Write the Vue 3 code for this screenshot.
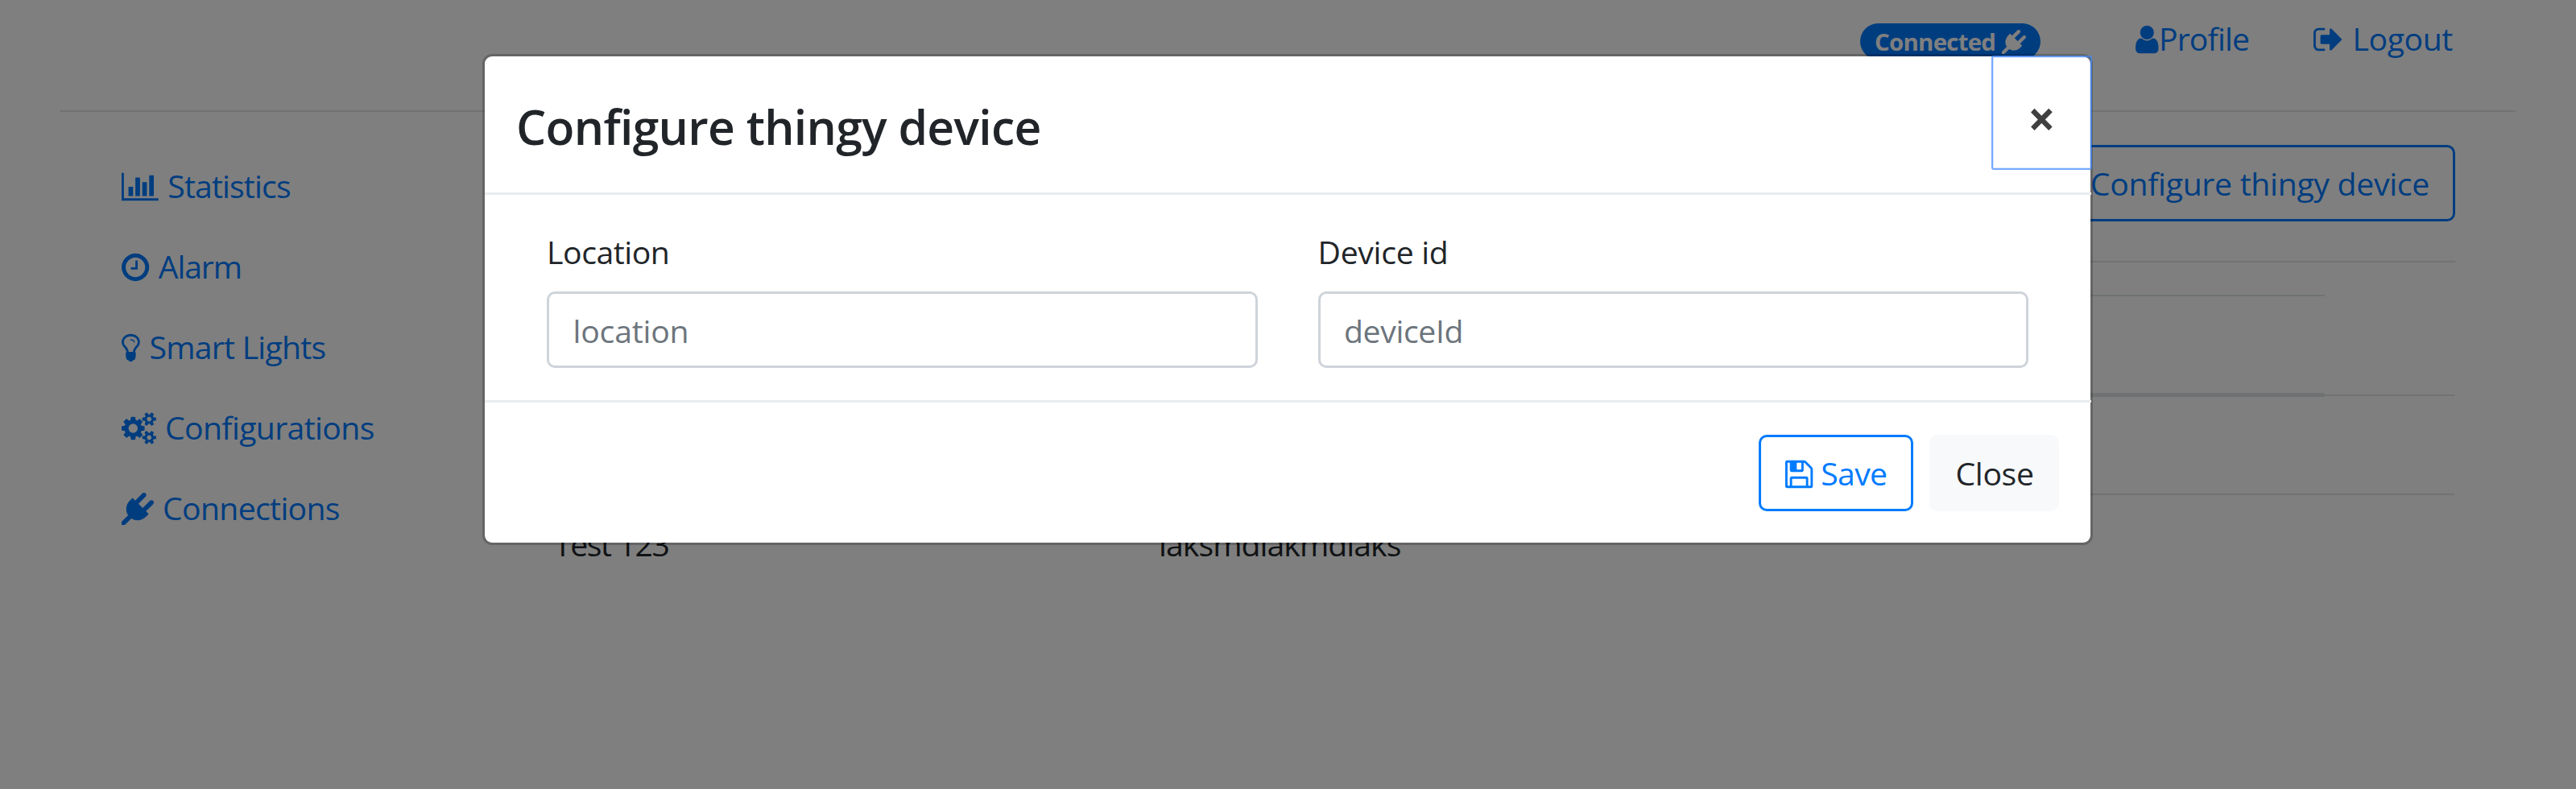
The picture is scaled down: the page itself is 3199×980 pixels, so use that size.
<script setup>
import { ref } from 'vue'

const icons = {
  chart: { box: '-128 0 2048 1792', d: 'M640 896v512h-256v-512h256zm384-512v1024h-256v-1024h256zm1024 1152v128h-2048v-1536h128v1408h1920zm-640-896v768h-256v-768h256zm384-384v1152h-256v-1152h256z', shift: true },
  clock: { box: '128 0 1536 1792', d: 'M1024 544v448q0 14-9 23t-23 9h-320q-14 0-23-9t-9-23v-64q0-14 9-23t23-9h224v-352q0-14 9-23t23-9h64q14 0 23 9t9 23zm416 352q0-148-73-273t-198-198-273-73-273 73-198 198-73 273 73 273 198 198 273 73 273-73 198-198 73-273zm224 0q0 209-103 385.5t-279.5 279.5-385.5 103-385.5-103-279.5-279.5-103-385.5 103-385.5 279.5-279.5 385.5-103 385.5 103 279.5 279.5 103 385.5z' },
  bulb: { box: '384 0 1024 1792', d: 'M1120 576q0 13-9.5 22.5t-22.5 9.5-22.5-9.5-9.5-22.5q0-46-54-71t-106-25q-13 0-22.5-9.5t-9.5-22.5 9.5-22.5 22.5-9.5q50 0 99.5 16t87 54 37.5 90zm160 0q0-72-34.5-134t-90-101.5-123-62-136.5-22.5-136.5 22.5-123 62-90 101.5-34.5 134q0 101 68 180 10 11 30.5 33t30.5 33q128 153 141 298h228q13-145 141-298 10-11 30.5-33t30.5-33q68-79 68-180zm128 0q0 155-103 268-45 49-74.5 87t-59.5 95.5-34 107.5q47 28 47 82 0 37-25 64 25 27 25 64 0 52-45 81 13 23 13 47 0 46-31.5 71t-77.5 25q-20 44-60 70t-87 26-87-26-60-70q-46 0-77.5-25t-31.5-71q0-24 13-47-45-29-45-81 0-37 25-64-25-27-25-64 0-54 47-82-4-50-34-107.5t-59.5-95.5-74.5-87q-103-113-103-268 0-99 44.5-184.5t117-142 164-89 186.5-32.5 186.5 32.5 164 89 117 142 44.5 184.5z' },
  cogs: { box: '-64 0 1920 1792', d: 'M832 896q0-106-75-181t-181-75-181 75-75 181 75 181 181 75 181-75 75-181zm768 512q0-52-38-90t-90-38-90 38-38 90q0 53 37.5 90.5t90.5 37.5 90.5-37.5 37.5-90.5zm0-1024q0-52-38-90t-90-38-90 38-38 90q0 53 37.5 90.5t90.5 37.5 90.5-37.5 37.5-90.5zm-384 421v185q0 10-7 19.5t-16 10.5l-155 24q-11 35-32 76 34 48 90 115 7 11 7 20 0 12-7 19-23 30-82.5 89.5t-78.5 59.5q-11 0-21-7l-115-90q-37 19-77 31-11 108-23 155-7 24-30 24h-186q-11 0-20-7.5t-10-17.5l-23-153q-34-10-75-31l-118 89q-7 7-20 7-11 0-21-8-144-133-144-160 0-9 7-19 10-14 41-53t47-61q-23-44-35-82l-152-24q-10-1-17-9.5t-7-19.5v-185q0-10 7-19.5t16-10.5l155-24q11-35 32-76-34-48-90-115-7-11-7-20 0-12 7-20 22-30 82-89t79-59q11 0 21 7l115 90q34-18 77-32 11-108 23-154 7-24 30-24h186q11 0 20 7.5t10 17.5l23 153q34 10 75 31l118-89q8-7 20-7 11 0 21 8 144 133 144 160 0 8-7 19-12 16-42 54t-45 60q23 48 34 82l152 23q10 2 17 10.5t7 19.5zm640 533v140q0 16-149 31-12 27-30 52 51 113 51 138 0 4-4 7-122 71-124 71-8 0-46-47t-52-68q-20 2-30 2t-30-2q-14 21-52 68t-46 47q-2 0-124-71-4-3-4-7 0-25 51-138-18-25-30-52-149-15-149-31v-140q0-16 149-31 13-29 30-52-51-113-51-138 0-4 4-7 4-2 35-20t59-34 30-16q8 0 46 46.5t52 67.5q20-2 30-2t30 2q51-71 92-112l6-2q4 0 124 70 4 3 4 7 0 25-51 138 17 23 30 52 149 15 149 31zm0-1024v140q0 16-149 31-12 27-30 52 51 113 51 138 0 4-4 7-122 71-124 71-8 0-46-47t-52-68q-20 2-30 2t-30-2q-14 21-52 68t-46 47q-2 0-124-71-4-3-4-7 0-25 51-138-18-25-30-52-149-15-149-31v-140q0-16 149-31 13-29 30-52-51-113-51-138 0-4 4-7 4-2 35-20t59-34 30-16q8 0 46 46.5t52 67.5q20-2 30-2t30 2q51-71 92-112l6-2q4 0 124 70 4 3 4 7 0 25-51 138 17 23 30 52 149 15 149 31z' },
  plug: { box: '0 0 1792 1792', d: 'M1755 453q37 38 37 90.5t-37 90.5l-401 400 150 150-160 160q-163 163-389.5 186.5t-411.5-100.5l-362 362h-181v-181l362-362q-124-185-100.5-411.5t186.5-389.5l160-160 150 150 400-401q38-37 91-37t90 37 37 90.5-37 90.5l-400 401 234 234 401-400q38-37 91-37t90 37z' },
  user: { box: '256 0 1280 1792', d: 'M1536 1399q0 109-62.5 187t-150.5 78h-854q-88 0-150.5-78t-62.5-187q0-85 8.5-160.5t31.5-152 58.5-131 94-89 134.5-34.5q131 128 313 128t313-128q76 0 134.5 34.5t94 89 58.5 131 31.5 152 8.5 160.5zm-256-887q0 159-112.5 271.5t-271.5 112.5-271.5-112.5-112.5-271.5 112.5-271.5 271.5-112.5 271.5 112.5 112.5 271.5z' },
  signout: { box: '64 0 1664 1792', d: 'M704 1440q0 4 1 20t.5 26.5-3 23.5-10 19.5-20.5 6.5h-320q-119 0-203.5-84.5t-84.5-203.5v-704q0-119 84.5-203.5t203.5-84.5h320q13 0 22.5 9.5t9.5 22.5q0 4 1 20t.5 26.5-3 23.5-10 19.5-20.5 6.5h-320q-66 0-113 47t-47 113v704q0 66 47 113t113 47h312l11.5 1 11.5 3 8 5.5 7 9 2 13.5zm928-544q0 26-19 45l-544 544q-19 19-45 19t-45-19-19-45v-288h-448q-26 0-45-19t-19-45v-384q0-26 19-45t45-19h448v-288q0-26 19-45t45-19 45 19l544 544q19 19 19 45z' },
  floppy: { box: '128 0 1536 1792', d: 'M512 1536h768v-384h-768v384zm896 0h128v-896q0-14-10-38.5t-20-34.5l-281-281q-10-10-34-20t-39-10v416q0 40-28 68t-68 28h-576q-40 0-68-28t-28-68v-416h-128v1280h128v-416q0-40 28-68t68-28h832q40 0 68 28t28 68v416zm-384-928v-320q0-13-9.5-22.5t-22.5-9.5h-192q-13 0-22.5 9.5t-9.5 22.5v320q0 13 9.5 22.5t22.5 9.5h192q13 0 22.5-9.5t9.5-22.5zm640 32v928q0 40-28 68t-68 28h-1344q-40 0-68-28t-28-68v-1344q0-40 28-68t68-28h928q40 0 88 20t76 48l280 280q28 28 48 76t20 88z' }
}
// The chart glyph is drawn from x = 0, so its view box starts there.
icons.chart.box = '0 0 2048 1792'

const nav = [
  { label: 'Statistics', icon: 'chart' },
  { label: 'Alarm', icon: 'clock' },
  { label: 'Smart Lights', icon: 'bulb' },
  { label: 'Configurations', icon: 'cogs' },
  { label: 'Connections', icon: 'plug' }
]

const location = ref('')
const deviceId = ref('')
</script>

<template>
  <div class="page">
    <header class="topbar">
      <span class="badge">
        <span>Connected</span>
        <svg class="icon" :viewBox="icons.plug.box"><path :d="icons.plug.d" /></svg>
      </span>
      <a class="link profile">
        <svg class="icon" :viewBox="icons.user.box"><path :d="icons.user.d" /></svg>
        <span>Profile</span>
      </a>
      <a class="link logout">
        <svg class="icon" :viewBox="icons.signout.box"><path :d="icons.signout.d" /></svg>
        <span>Logout</span>
      </a>
    </header>
    <div class="rule"></div>

    <div class="columns">
      <nav class="sidebar">
        <a v-for="item in nav" :key="item.label" class="link" :class="item.icon">
          <svg class="icon" :viewBox="icons[item.icon].box"><path :d="icons[item.icon].d" /></svg>
          <span>{{ item.label }}</span>
        </a>
      </nav>

      <main class="content">
        <div class="toolbar">
          <button class="btn outline open">Configure thingy device</button>
        </div>
        <div class="section-rule"></div>
        <div class="table">
          <div class="head"></div>
          <div class="split"><i class="thick"></i><i class="thin"></i></div>
          <div class="row empty"></div>
          <div class="row device">
            <span class="name">Test 123</span>
            <span class="id">laksmdlakmdlaks</span>
          </div>
        </div>
      </main>
    </div>

    <div class="backdrop">
      <section class="modal" role="dialog">
        <header class="modal-header">
          <h4>Configure thingy device</h4>
          <button class="close">×</button>
        </header>
        <div class="modal-body">
          <div class="field">
            <label class="l-location">Location</label>
            <input v-model="location" class="i-location" placeholder="location" />
          </div>
          <div class="field">
            <label class="l-device">Device id</label>
            <input v-model="deviceId" class="i-device" placeholder="deviceId" />
          </div>
        </div>
        <footer class="modal-footer">
          <button class="btn outline save">
            <svg class="icon" :viewBox="icons.floppy.box"><path :d="icons.floppy.d" /></svg>
            <span>Save</span>
          </button>
          <button class="btn light">Close</button>
        </footer>
      </section>
    </div>
  </div>
</template>

<style>
body { overflow: hidden; }
</style>

<style scoped>
.page, .page * { box-sizing: border-box; }
.page {
  position: relative;
  width: 3199px;
  height: 980px;
  overflow: hidden;
  background: #fff;
  color: #212529;
  font: 39.2px/60px "Open Sans", "Noto Sans", sans-serif;
}
button, input { font: inherit; margin: 0; }
span, h4, button, label { white-space: nowrap; }
.icon { display: block; flex: none; height: 40px; width: auto; margin-top: 10.8px; fill: currentColor; overflow: visible; }

.topbar { display: flex; align-items: flex-start; height: 137px; padding: 18px 0 0 2310px; }
.badge {
  display: flex;
  flex: none;
  gap: 7.8px;
  width: 224px;
  height: 45px;
  margin-top: 11px;
  padding: 8px 0 0 18px;
  border-radius: 25px;
  background: #007bff;
  color: #fff;
  font-size: 29.4px;
  font-weight: 700;
  line-height: 30px;
  letter-spacing: -0.732px;
}
.badge .icon { height: 30px; margin-top: 0.3px; }
.link { display: flex; flex: none; align-items: flex-start; gap: 11.4px; height: 60px; color: #007bff; }
.profile { gap: 0.4px; margin-left: 118px; letter-spacing: -0.855px; }
.logout { gap: 11.2px; margin-left: 80px; letter-spacing: -0.4px; }
.rule { height: 2px; margin: 0 75px 0 74px; background: rgba(0, 0, 0, 0.1); }

.columns { display: flex; }
.sidebar { display: flex; flex-direction: column; flex: none; gap: 40px; width: 640px; padding: 62px 0 0 151.2px; }
.chart { letter-spacing: -0.867px; }
.clock { letter-spacing: -1.15px; }
.bulb { letter-spacing: -0.748px; }
.cogs { gap: 10.9px; letter-spacing: -0.626px; }
.plug { gap: 10.9px; letter-spacing: -0.677px; }

.content { flex: none; width: 2409px; padding-top: 41px; }
.toolbar { display: flex; justify-content: flex-end; height: 95px; }
.btn { display: flex; align-items: flex-start; height: 95px; padding: 15px 0 0; border: 3px solid transparent; border-radius: 10px; }
.outline { border-color: #007bff; background: transparent; color: #007bff; }
.open { justify-content: flex-end; width: 512px; padding-right: 29px; letter-spacing: -0.301px; }
.section-rule { height: 2px; margin-top: 49px; background: rgba(0, 0, 0, 0.1); }
.table { width: 2408px; margin-top: 40px; }
.head { width: 2247px; height: 122px; border-top: 2px solid #dee2e6; }
.split { display: flex; align-items: center; height: 5px; }
.thick { width: 2247px; height: 5px; background: #dee2e6; }
.thin { flex: 1; height: 2px; background: #dee2e6; }
.empty { height: 122px; border-bottom: 2px solid #dee2e6; }
.device { display: flex; padding: 31px 0 0 48px; }
.name { width: 751px; letter-spacing: -1.4px; }
.id { letter-spacing: -0.95px; }

.backdrop { position: absolute; inset: 0; padding: 67px 0 0 599px; background: rgba(0, 0, 0, 0.5); }
.modal {
  width: 2000px;
  height: 610px;
  border: 3px solid rgba(0, 0, 0, 0.2);
  border-radius: 12px;
  background: #fff;
  background-clip: padding-box;
}
.modal-header { position: relative; height: 172px; margin-right: -1px; padding: 42px 0 0 39px; border-bottom: 3px solid #e9ecef; }
h4 { margin: 0; font-size: 58.8px; font-weight: 600; line-height: 90px; letter-spacing: -0.7px; }
.close {
  position: absolute;
  top: -1px;
  right: -1px;
  width: 125px;
  height: 142px;
  padding: 46px 0 32px;
  border: 2px solid rgba(65, 136, 255, 0.72);
  border-radius: 3px;
  background: transparent;
  box-shadow: inset 0 0 0 1px rgba(65, 136, 255, 0.2);
  color: #404040;
  font-size: 60px;
  font-weight: 700;
  line-height: 60px;
  text-align: center;
}
.modal-body { display: flex; gap: 75px; height: 255px; padding: 41px 77px 0; }
.field { display: flex; flex: 1; flex-direction: column; }
label { height: 60px; margin: 0 0 19px; }
input {
  width: 100%;
  height: 95px;
  padding: 15px 28px 14px 29.5px;
  border: 3px solid #ced4da;
  border-radius: 10px;
  background: #fff;
  line-height: 60px;
}
input::placeholder { color: #6c757d; opacity: 1; }
.l-location { letter-spacing: -0.45px; }
.i-location { letter-spacing: -0.2px; }
.l-device { letter-spacing: -0.3px; }
.i-device { letter-spacing: -0.38px; }
.modal-footer { display: flex; justify-content: flex-end; gap: 20px; height: 177px; margin-right: -1px; padding: 40px 40px 0 0; border-top: 3px solid #e9ecef; }
.save { gap: 10.5px; width: 192px; padding-left: 29.5px; letter-spacing: -0.7px; }
.light { width: 161px; padding-left: 29.5px; background: #f8f9fa; color: #212529; letter-spacing: -0.35px; }
</style>
